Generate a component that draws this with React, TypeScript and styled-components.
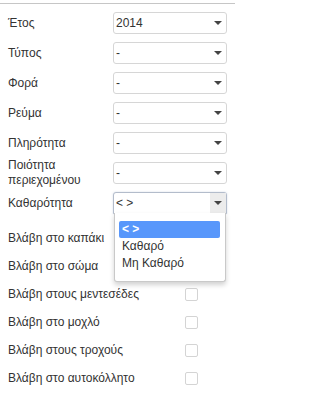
import styled, { createGlobalStyle } from 'styled-components'

const GlobalStyle = createGlobalStyle`
  html, body {
    margin: 0;
    padding: 0;
    background: #fff;
  }
  body {
    font-family: "Liberation Sans", Arial, sans-serif;
    color: #333;
  }
`

const Panel = styled.div`
  margin-top: 3px;
  border-top: 1px solid #c6c6c6;
  padding: 4px 8px 0 8px;
  width: 235px;
  box-sizing: border-box;
`

const SelectRow = styled.div`
  display: grid;
  grid-template-columns: 105px 114px;
  align-items: center;
  height: 30px;
`

const CheckRows = styled.div`
  padding-top: 6px;
`

const CheckRow = styled.div`
  display: grid;
  grid-template-columns: 177px 13px;
  align-items: center;
  height: 28px;
`

const Label = styled.div`
  font-size: 12px;
  line-height: 15px;
  color: #333;
`

const SelectWrap = styled.div`
  position: relative;
`

const SelectBox = styled.div<{ $open?: boolean }>`
  position: relative;
  height: 22px;
  box-sizing: border-box;
  border: 1px solid ${({ $open }) => ($open ? '#b3bccb' : '#d6d6d6')};
  border-radius: ${({ $open }) => ($open ? '3px 3px 0 0' : '3px')};
  background: #fff;
  display: flex;
  align-items: center;
  padding-left: 2px;
  font-size: 12px;
  color: #333;
  box-shadow: ${({ $open }) => ($open ? '0 0 2px rgba(120,140,180,0.35)' : 'none')};
`

const ArrowZone = styled.div<{ $open?: boolean }>`
  position: absolute;
  top: 0;
  right: 0;
  bottom: 0;
  width: 16px;
  background: ${({ $open }) => ($open ? '#ececec' : 'transparent')};
  display: flex;
  align-items: center;
  justify-content: center;
`

const Arrow = styled.div`
  width: 0;
  height: 0;
  border-left: 4px solid transparent;
  border-right: 4px solid transparent;
  border-top: 4px solid #444;
`

const Dropdown = styled.div`
  position: absolute;
  top: 21px;
  left: 1px;
  width: 112px;
  box-sizing: border-box;
  background: #fff;
  border: 1px solid #c9c9c9;
  border-top: none;
  border-radius: 0 0 3px 3px;
  box-shadow: 0 3px 5px rgba(0, 0, 0, 0.18);
  padding: 8px 5px 9px 4px;
  z-index: 5;
`

const Option = styled.div<{ $active?: boolean }>`
  height: 17px;
  line-height: 17px;
  padding-left: 3px;
  font-size: 12px;
  color: ${({ $active }) => ($active ? '#fff' : '#333')};
  font-weight: ${({ $active }) => ($active ? 'bold' : 'normal')};
  background: ${({ $active }) => ($active ? '#5897fb' : 'transparent')};
  border-radius: ${({ $active }) => ($active ? '2px' : '0')};
`

const Checkbox = styled.div`
  width: 13px;
  height: 13px;
  box-sizing: border-box;
  border: 1px solid #d4d4d4;
  border-radius: 2px;
  background: #fff;
`

const selects = [
  { label: 'Έτος', value: '2014' },
  { label: 'Τύπος', value: '-' },
  { label: 'Φορά', value: '-' },
  { label: 'Ρεύμα', value: '-' },
  { label: 'Πληρότητα', value: '-' },
  { label: 'Ποιότητα περιεχομένου', value: '-' },
]

const checks = [
  'Βλάβη στο καπάκι',
  'Βλάβη στο σώμα',
  'Βλάβη στους μεντεσέδες',
  'Βλάβη στο μοχλό',
  'Βλάβη στους τροχούς',
  'Βλάβη στο αυτοκόλλητο',
]

export default function App() {
  return (
    <>
      <GlobalStyle />
      <Panel>
        {selects.map((s) => (
          <SelectRow key={s.label}>
            <Label>{s.label}</Label>
            <SelectWrap>
              <SelectBox>
                {s.value}
                <ArrowZone>
                  <Arrow />
                </ArrowZone>
              </SelectBox>
            </SelectWrap>
          </SelectRow>
        ))}
        <SelectRow>
          <Label>Καθαρότητα</Label>
          <SelectWrap>
            <SelectBox $open>
              {'< >'}
              <ArrowZone $open>
                <Arrow />
              </ArrowZone>
            </SelectBox>
            <Dropdown>
              <Option $active>{'< >'}</Option>
              <Option>Καθαρό</Option>
              <Option>Μη Καθαρό</Option>
            </Dropdown>
          </SelectWrap>
        </SelectRow>
        <CheckRows>
          {checks.map((c, i) => (
            <CheckRow key={c}>
              <Label>{c}</Label>
              {i > 1 ? <Checkbox /> : <span />}
            </CheckRow>
          ))}
        </CheckRows>
      </Panel>
    </>
  )
}
